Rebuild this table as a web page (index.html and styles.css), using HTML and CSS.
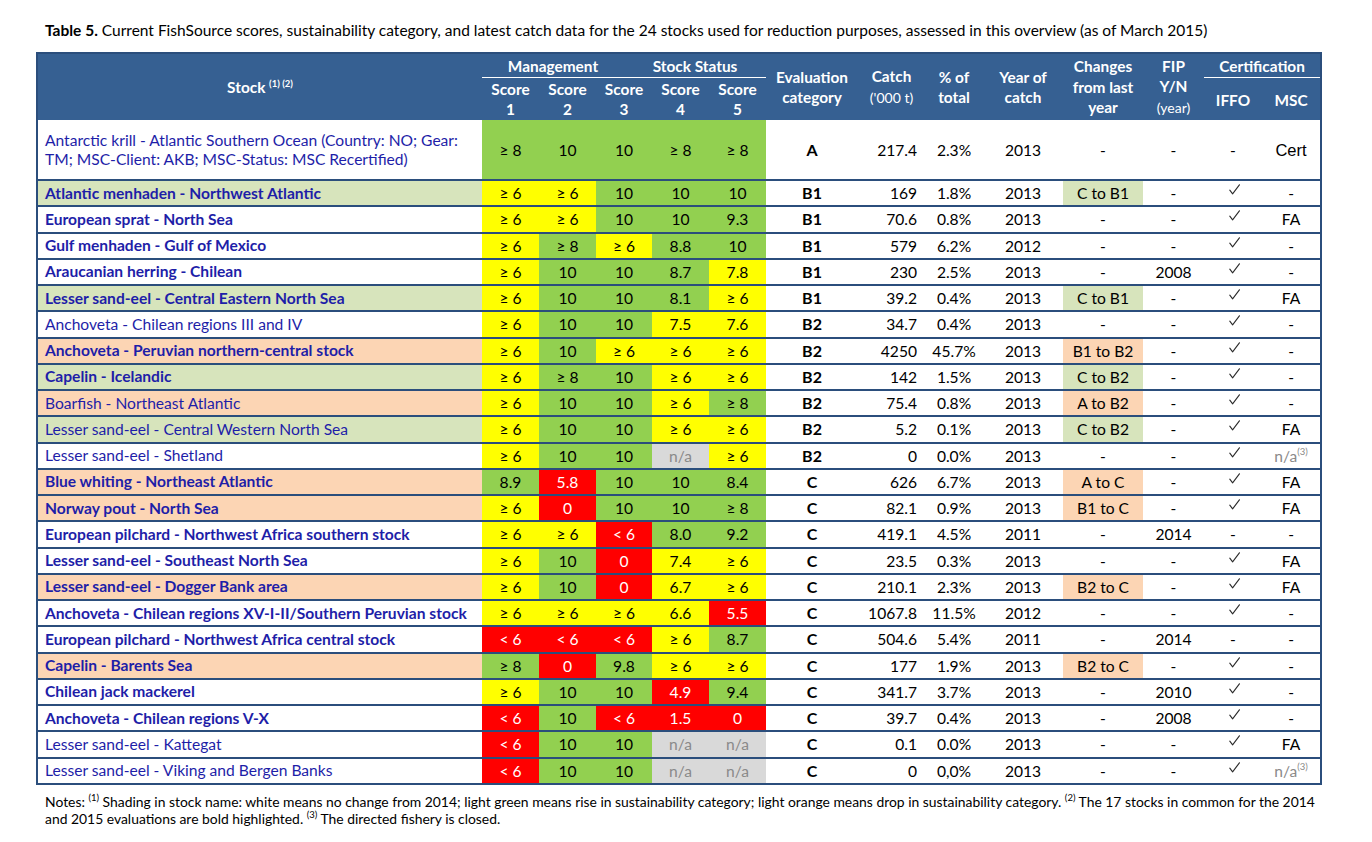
FILE: index.html
```html
<!DOCTYPE html>
<html lang="en">
<head>
<meta charset="utf-8">
<title>Table 5</title>
<link rel="stylesheet" href="styles.css">
</head>
<body>
<div class="page">
  <p class="caption"><b>Table 5.</b> Current FishSource scores, sustainability category, and latest catch data for the 24 stocks used for reduction purposes, assessed in this overview (as of March 2015)</p>
  <table class="fish">
    <colgroup>
      <col class="c-stock"><col class="c-score"><col class="c-score"><col class="c-score3"><col class="c-score"><col class="c-score">
      <col class="c-eval"><col class="c-catch"><col class="c-pct"><col class="c-year"><col class="c-chg"><col class="c-fip"><col class="c-iffo"><col class="c-msc">
    </colgroup>
    <thead>
      <tr class="h1">
        <th rowspan="2" class="h-stock">Stock <sup>(1) (2)</sup></th>
        <th colspan="3" class="grp">Management</th>
        <th colspan="2" class="grp">Stock Status</th>
        <th rowspan="2">Evaluation<br>category</th>
        <th rowspan="2">Catch<br><span class="thin">('000 t)</span></th>
        <th rowspan="2">% of<br>total</th>
        <th rowspan="2">Year of<br>catch</th>
        <th rowspan="2">Changes<br>from last<br>year</th>
        <th rowspan="2" class="h-fip">FIP<br>Y/N<br><span class="thin">(year)</span></th>
        <th colspan="2" class="grp cert">Certification</th>
      </tr>
      <tr class="h2">
        <th>Score<br>1</th><th>Score<br>2</th><th>Score<br>3</th><th>Score<br>4</th><th>Score<br>5</th>
        <th class="low">IFFO</th><th class="low">MSC</th>
      </tr>
    </thead>
    <tbody>
      <tr class="tall">
        <td class="st">Antarctic krill - Atlantic Southern Ocean (Country: NO; Gear: TM; MSC-Client: AKB; MSC-Status: MSC Recertified)</td>
        <td class="g">≥ 8</td><td class="g">10</td><td class="g">10</td><td class="g">≥ 8</td><td class="g">≥ 8</td>
        <td class="ev">A</td><td class="ct">217.4</td><td>2.3%</td><td>2013</td><td>-</td><td>-</td><td>-</td><td class="cert-t">Cert</td>
      </tr>
      <tr>
        <td class="st b up">Atlantic menhaden - Northwest Atlantic</td>
        <td class="y">≥ 6</td><td class="y">≥ 6</td><td class="g">10</td><td class="g">10</td><td class="g">10</td>
        <td class="ev">B1</td><td class="ct">169</td><td>1.8%</td><td>2013</td><td class="up">C to B1</td><td>-</td><td class="ck"><svg class="tick" viewBox="0 0 11 11"><path d="M0.8 6.2 L3.6 9.8 L10.4 0.8"/></svg></td><td>-</td>
      </tr>
      <tr>
        <td class="st b">European sprat - North Sea</td>
        <td class="y">≥ 6</td><td class="y">≥ 6</td><td class="g">10</td><td class="g">10</td><td class="g">9.3</td>
        <td class="ev">B1</td><td class="ct">70.6</td><td>0.8%</td><td>2013</td><td>-</td><td>-</td><td class="ck"><svg class="tick" viewBox="0 0 11 11"><path d="M0.8 6.2 L3.6 9.8 L10.4 0.8"/></svg></td><td>FA</td>
      </tr>
      <tr>
        <td class="st b">Gulf menhaden - Gulf of Mexico</td>
        <td class="y">≥ 6</td><td class="g">≥ 8</td><td class="y">≥ 6</td><td class="g">8.8</td><td class="g">10</td>
        <td class="ev">B1</td><td class="ct">579</td><td>6.2%</td><td>2012</td><td>-</td><td>-</td><td class="ck"><svg class="tick" viewBox="0 0 11 11"><path d="M0.8 6.2 L3.6 9.8 L10.4 0.8"/></svg></td><td>-</td>
      </tr>
      <tr>
        <td class="st b">Araucanian herring - Chilean</td>
        <td class="y">≥ 6</td><td class="g">10</td><td class="g">10</td><td class="g">8.7</td><td class="y">7.8</td>
        <td class="ev">B1</td><td class="ct">230</td><td>2.5%</td><td>2013</td><td>-</td><td>2008</td><td class="ck"><svg class="tick" viewBox="0 0 11 11"><path d="M0.8 6.2 L3.6 9.8 L10.4 0.8"/></svg></td><td>-</td>
      </tr>
      <tr>
        <td class="st b up">Lesser sand-eel - Central Eastern North Sea</td>
        <td class="y">≥ 6</td><td class="g">10</td><td class="g">10</td><td class="g">8.1</td><td class="y">≥ 6</td>
        <td class="ev">B1</td><td class="ct">39.2</td><td>0.4%</td><td>2013</td><td class="up">C to B1</td><td>-</td><td class="ck"><svg class="tick" viewBox="0 0 11 11"><path d="M0.8 6.2 L3.6 9.8 L10.4 0.8"/></svg></td><td>FA</td>
      </tr>
      <tr>
        <td class="st">Anchoveta - Chilean regions III and IV</td>
        <td class="y">≥ 6</td><td class="g">10</td><td class="g">10</td><td class="y">7.5</td><td class="y">7.6</td>
        <td class="ev">B2</td><td class="ct">34.7</td><td>0.4%</td><td>2013</td><td>-</td><td>-</td><td class="ck"><svg class="tick" viewBox="0 0 11 11"><path d="M0.8 6.2 L3.6 9.8 L10.4 0.8"/></svg></td><td>-</td>
      </tr>
      <tr>
        <td class="st b down">Anchoveta - Peruvian northern-central stock</td>
        <td class="y">≥ 6</td><td class="g">10</td><td class="y">≥ 6</td><td class="y">≥ 6</td><td class="y">≥ 6</td>
        <td class="ev">B2</td><td class="ct">4250</td><td>45.7%</td><td>2013</td><td class="down">B1 to B2</td><td>-</td><td class="ck"><svg class="tick" viewBox="0 0 11 11"><path d="M0.8 6.2 L3.6 9.8 L10.4 0.8"/></svg></td><td>-</td>
      </tr>
      <tr>
        <td class="st b up">Capelin - Icelandic</td>
        <td class="y">≥ 6</td><td class="g">≥ 8</td><td class="g">10</td><td class="y">≥ 6</td><td class="y">≥ 6</td>
        <td class="ev">B2</td><td class="ct">142</td><td>1.5%</td><td>2013</td><td class="up">C to B2</td><td>-</td><td class="ck"><svg class="tick" viewBox="0 0 11 11"><path d="M0.8 6.2 L3.6 9.8 L10.4 0.8"/></svg></td><td>-</td>
      </tr>
      <tr>
        <td class="st down">Boarfish - Northeast Atlantic</td>
        <td class="y">≥ 6</td><td class="g">10</td><td class="g">10</td><td class="y">≥ 6</td><td class="g">≥ 8</td>
        <td class="ev">B2</td><td class="ct">75.4</td><td>0.8%</td><td>2013</td><td class="down">A to B2</td><td>-</td><td class="ck"><svg class="tick" viewBox="0 0 11 11"><path d="M0.8 6.2 L3.6 9.8 L10.4 0.8"/></svg></td><td>-</td>
      </tr>
      <tr>
        <td class="st up">Lesser sand-eel - Central Western North Sea</td>
        <td class="y">≥ 6</td><td class="g">10</td><td class="g">10</td><td class="y">≥ 6</td><td class="y">≥ 6</td>
        <td class="ev">B2</td><td class="ct">5.2</td><td>0.1%</td><td>2013</td><td class="up">C to B2</td><td>-</td><td class="ck"><svg class="tick" viewBox="0 0 11 11"><path d="M0.8 6.2 L3.6 9.8 L10.4 0.8"/></svg></td><td>FA</td>
      </tr>
      <tr>
        <td class="st">Lesser sand-eel - Shetland</td>
        <td class="y">≥ 6</td><td class="g">10</td><td class="g">10</td><td class="n">n/a</td><td class="y">≥ 6</td>
        <td class="ev">B2</td><td class="ct">0</td><td>0.0%</td><td>2013</td><td>-</td><td>-</td><td class="ck"><svg class="tick" viewBox="0 0 11 11"><path d="M0.8 6.2 L3.6 9.8 L10.4 0.8"/></svg></td><td class="na">n/a<sup>(3)</sup></td>
      </tr>
      <tr>
        <td class="st b down">Blue whiting - Northeast Atlantic</td>
        <td class="g">8.9</td><td class="r">5.8</td><td class="g">10</td><td class="g">10</td><td class="g">8.4</td>
        <td class="ev">C</td><td class="ct">626</td><td>6.7%</td><td>2013</td><td class="down">A to C</td><td>-</td><td class="ck"><svg class="tick" viewBox="0 0 11 11"><path d="M0.8 6.2 L3.6 9.8 L10.4 0.8"/></svg></td><td>FA</td>
      </tr>
      <tr>
        <td class="st b down">Norway pout - North Sea</td>
        <td class="y">≥ 6</td><td class="r">0</td><td class="g">10</td><td class="g">10</td><td class="g">≥ 8</td>
        <td class="ev">C</td><td class="ct">82.1</td><td>0.9%</td><td>2013</td><td class="down">B1 to C</td><td>-</td><td class="ck"><svg class="tick" viewBox="0 0 11 11"><path d="M0.8 6.2 L3.6 9.8 L10.4 0.8"/></svg></td><td>FA</td>
      </tr>
      <tr>
        <td class="st b">European pilchard - Northwest Africa southern stock</td>
        <td class="y">≥ 6</td><td class="y">≥ 6</td><td class="r">&lt; 6</td><td class="g">8.0</td><td class="g">9.2</td>
        <td class="ev">C</td><td class="ct">419.1</td><td>4.5%</td><td>2011</td><td>-</td><td>2014</td><td>-</td><td>-</td>
      </tr>
      <tr>
        <td class="st b">Lesser sand-eel - Southeast North Sea</td>
        <td class="y">≥ 6</td><td class="g">10</td><td class="r">0</td><td class="y">7.4</td><td class="y">≥ 6</td>
        <td class="ev">C</td><td class="ct">23.5</td><td>0.3%</td><td>2013</td><td>-</td><td>-</td><td class="ck"><svg class="tick" viewBox="0 0 11 11"><path d="M0.8 6.2 L3.6 9.8 L10.4 0.8"/></svg></td><td>FA</td>
      </tr>
      <tr>
        <td class="st b down">Lesser sand-eel - Dogger Bank area</td>
        <td class="y">≥ 6</td><td class="g">10</td><td class="r">0</td><td class="y">6.7</td><td class="y">≥ 6</td>
        <td class="ev">C</td><td class="ct">210.1</td><td>2.3%</td><td>2013</td><td class="down">B2 to C</td><td>-</td><td class="ck"><svg class="tick" viewBox="0 0 11 11"><path d="M0.8 6.2 L3.6 9.8 L10.4 0.8"/></svg></td><td>FA</td>
      </tr>
      <tr>
        <td class="st b">Anchoveta - Chilean regions XV-I-II/Southern Peruvian stock</td>
        <td class="y">≥ 6</td><td class="y">≥ 6</td><td class="y">≥ 6</td><td class="y">6.6</td><td class="r">5.5</td>
        <td class="ev">C</td><td class="ct">1067.8</td><td>11.5%</td><td>2012</td><td>-</td><td>-</td><td class="ck"><svg class="tick" viewBox="0 0 11 11"><path d="M0.8 6.2 L3.6 9.8 L10.4 0.8"/></svg></td><td>-</td>
      </tr>
      <tr>
        <td class="st b">European pilchard - Northwest Africa central stock</td>
        <td class="r">&lt; 6</td><td class="r">&lt; 6</td><td class="r">&lt; 6</td><td class="y">≥ 6</td><td class="g">8.7</td>
        <td class="ev">C</td><td class="ct">504.6</td><td>5.4%</td><td>2011</td><td>-</td><td>2014</td><td>-</td><td>-</td>
      </tr>
      <tr>
        <td class="st b down">Capelin - Barents Sea</td>
        <td class="g">≥ 8</td><td class="r">0</td><td class="g">9.8</td><td class="y">≥ 6</td><td class="y">≥ 6</td>
        <td class="ev">C</td><td class="ct">177</td><td>1.9%</td><td>2013</td><td class="down">B2 to C</td><td>-</td><td class="ck"><svg class="tick" viewBox="0 0 11 11"><path d="M0.8 6.2 L3.6 9.8 L10.4 0.8"/></svg></td><td>-</td>
      </tr>
      <tr>
        <td class="st b">Chilean jack mackerel</td>
        <td class="y">≥ 6</td><td class="g">10</td><td class="g">10</td><td class="r">4.9</td><td class="g">9.4</td>
        <td class="ev">C</td><td class="ct">341.7</td><td>3.7%</td><td>2013</td><td>-</td><td>2010</td><td class="ck"><svg class="tick" viewBox="0 0 11 11"><path d="M0.8 6.2 L3.6 9.8 L10.4 0.8"/></svg></td><td>-</td>
      </tr>
      <tr>
        <td class="st b">Anchoveta - Chilean regions V-X</td>
        <td class="r">&lt; 6</td><td class="g">10</td><td class="r">&lt; 6</td><td class="r">1.5</td><td class="r">0</td>
        <td class="ev">C</td><td class="ct">39.7</td><td>0.4%</td><td>2013</td><td>-</td><td>2008</td><td class="ck"><svg class="tick" viewBox="0 0 11 11"><path d="M0.8 6.2 L3.6 9.8 L10.4 0.8"/></svg></td><td>-</td>
      </tr>
      <tr>
        <td class="st">Lesser sand-eel - Kattegat</td>
        <td class="r">&lt; 6</td><td class="g">10</td><td class="g">10</td><td class="n">n/a</td><td class="n">n/a</td>
        <td class="ev">C</td><td class="ct">0.1</td><td>0.0%</td><td>2013</td><td>-</td><td>-</td><td class="ck"><svg class="tick" viewBox="0 0 11 11"><path d="M0.8 6.2 L3.6 9.8 L10.4 0.8"/></svg></td><td>FA</td>
      </tr>
      <tr class="last">
        <td class="st">Lesser sand-eel - Viking and Bergen Banks</td>
        <td class="r">&lt; 6</td><td class="g">10</td><td class="g">10</td><td class="n">n/a</td><td class="n">n/a</td>
        <td class="ev">C</td><td class="ct">0</td><td>0,0%</td><td>2013</td><td>-</td><td>-</td><td class="ck"><svg class="tick" viewBox="0 0 11 11"><path d="M0.8 6.2 L3.6 9.8 L10.4 0.8"/></svg></td><td class="na">n/a<sup>(3)</sup></td>
      </tr>
    </tbody>
  </table>
  <p class="notes">Notes: <sup>(1)</sup> Shading in stock name: white means no change from 2014; light green means rise in sustainability category; light orange means drop in sustainability category. <sup>(2)</sup> The 17 stocks in common for the 2014<br>and 2015 evaluations are bold highlighted. <sup>(3)</sup> The directed fishery is closed.</p>
</div>
</body>
</html>
```

FILE: styles.css
```css
* { box-sizing: border-box; }

body {
  margin: 0;
  background: #ffffff;
  color: #000000;
  font-family: Lato, "Open Sans", "Liberation Sans", sans-serif;
}

.page {
  padding: 21px 0 0 36px;
}

.caption {
  margin: 0 0 12px 9px;
  font-size: 15.5px;
  line-height: 19px;
  white-space: nowrap;
}

.fish {
  width: 1286px;
  table-layout: fixed;
  border-collapse: separate;
  border-spacing: 0;
  border: 2px solid #2b4e7c;
  font-size: 15.6px;
}

.c-stock { width: 444px; }
.c-score { width: 57px; }
.c-score3 { width: 56px; }
.c-eval { width: 92px; }
.c-catch { width: 67px; }
.c-pct { width: 58px; }
.c-year { width: 80px; }
.c-chg { width: 80px; }
.c-fip { width: 61px; }
.c-iffo { width: 58px; }
.c-msc { width: 58px; }

.fish th {
  background: #366092;
  color: #ffffff;
  font-weight: 700;
  font-size: 15.4px;
  line-height: 20.5px;
  padding: 0;
  text-align: center;
  vertical-align: middle;
}

.fish th sup {
  font-size: 9.5px;
  vertical-align: 6px;
  line-height: 0;
}

.fish .thin {
  font-weight: 400;
  font-size: 14px;
}

.h-fip { line-height: 19px; }

.h1 th { height: 24px; }
.h2 th { height: 42px; line-height: 20px; }

.fish th.grp {
  border-bottom: 1px solid #ffffff;
  padding-right: 28px;
  line-height: 22px;
}

.fish th.cert { padding-right: 0; }

.h2 th.low { padding-top: 2px; }

.fish td {
  height: 26.25px;
  padding: 0 4px;
  border-bottom: 2px solid #2b4e7c;
  text-align: center;
  vertical-align: middle;
  line-height: 18px;
  white-space: nowrap;
}

.fish tr.tall td { height: 61px; }
.fish tr.last td { border-bottom: none; height: 24.5px; }

.fish td.st {
  text-align: left;
  padding-left: 7px;
  color: #1e1ea8;
  white-space: normal;
  line-height: 19px;
}

.fish td.b { font-weight: 700; }

.fish td.up { background: #d7e4bc; }
.fish td.down { background: #fcd5b4; }

.fish td.g { background: #92d050; }
.fish td.y { background: #ffff00; }
.fish td.r { background: #ff0000; color: #ffffff; }
.fish td.n { background: #d9d9d9; color: #8a8a8a; }

.fish td.ev { font-weight: 700; font-size: 16px; }
.fish td.ct { text-align: right; padding-right: 8px; }

.fish td.ck {
  line-height: 0;
  padding-bottom: 7px;
}

.tick {
  width: 11px;
  height: 11px;
  display: inline-block;
  margin-left: 2px;
}

.tick path {
  fill: none;
  stroke: #2a2a2a;
  stroke-width: 1.1;
  stroke-linecap: round;
  stroke-linejoin: round;
}

.fish td.cert-t {
  font-family: "Liberation Sans", Arial, sans-serif;
  font-size: 16.5px;
}

.fish td.na { color: #8a8a8a; }
.fish td.na sup {
  font-size: 9.5px;
  vertical-align: 7px;
  line-height: 0;
}

.notes {
  margin: 8px 0 0 9px;
  font-size: 13.9px;
  line-height: 17px;
}

.notes sup {
  font-size: 9.5px;
  vertical-align: 6px;
  line-height: 0;
}
```
